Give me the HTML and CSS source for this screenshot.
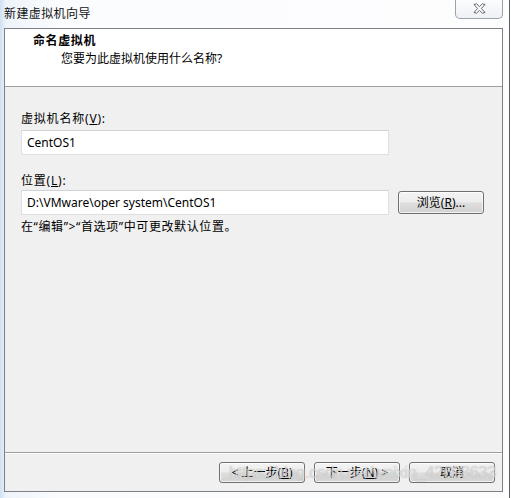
FILE: index.html
```html
<!DOCTYPE html>
<html lang="zh-CN">
<head>
<meta charset="utf-8">
<title>新建虚拟机向导</title>
<link rel="stylesheet" href="styles.css">
</head>
<body>
<div class="window">
  <div class="titlebar">
    <span class="title">新建虚拟机向导</span>
    <button class="close" aria-label="关闭">
      <svg width="13" height="11" viewBox="0 0 13 11">
        <path d="M1 1.5 L3.5 0.8 L6.5 3.6 L9.5 0.8 L12 1.5 L8.4 5.5 L12 9.5 L9.5 10.2 L6.5 7.4 L3.5 10.2 L1 9.5 L4.6 5.5 Z" fill="#ffffff" stroke="#4b5565" stroke-width="0.9" stroke-linejoin="round"/>
      </svg>
    </button>
  </div>
  <div class="panel">
    <div class="header">
      <div class="h-title">命名虚拟机</div>
      <div class="h-sub">您要为此虚拟机使用什么名称?</div>
    </div>
    <div class="body">
      <div class="label">虚拟机名称(<u>V</u>):</div>
      <div class="field">CentOS1</div>
      <div class="label label-2">位置(<u>L</u>):</div>
      <div class="row">
        <div class="field">D:\VMware\oper system\CentOS1</div>
        <button class="btn browse">浏览(<u>R</u>)...</button>
      </div>
      <p class="note">在“编辑”&gt;“首选项”中可更改默认位置。</p>
    </div>
    <div class="footer">
      <button class="btn">&lt; 上一步(<u>B</u>)</button>
      <button class="btn">下一步(<u>N</u>) &gt;</button>
      <button class="btn">取消</button>
    </div>
  </div>
  <div class="watermark">https://blog.csdn.net/weixin_42698633</div>
</div>
</body>
</html>
```

FILE: styles.css
```css
* {
  box-sizing: border-box;
}

html, body {
  margin: 0;
  padding: 0;
}

body {
  font-family: "Noto Sans", "Noto Sans CJK SC", sans-serif;
  font-size: 12px;
  color: #000;
  background: #ffffff;
}

.window {
  position: relative;
  width: 510px;
  height: 498px;
  border-right: 1px solid #5a5f66;
  background: linear-gradient(to right, #cfe0f2 0px, #eef4fa 6px, #fbfcfe 60px, #fdfdfe 100%);
  overflow: hidden;
}

.titlebar {
  height: 28px;
  display: flex;
  align-items: flex-start;
  padding-left: 4px;
}

.title {
  margin-top: 6px;
  line-height: 16px;
  letter-spacing: 0.4px;
  color: #111;
}

.close {
  margin-left: auto;
  margin-right: 6px;
  width: 48px;
  height: 19px;
  padding: 0;
  border: 1px solid #9aa2ad;
  border-top: none;
  border-radius: 0 0 5px 5px;
  background: linear-gradient(#fbfcfd, #eef1f5);
  display: flex;
  align-items: center;
  justify-content: center;
}

.close svg {
  display: block;
  margin-top: -1px;
}

.panel {
  margin-left: 4px;
  width: 499px;
  height: 464px;
  border: 1px solid #7d8086;
  display: flex;
  flex-direction: column;
  background: #f0f0f0;
}

.header {
  height: 58px;
  flex: none;
  background: #ffffff;
  border-bottom: 1px solid #a0a0a0;
  padding: 4px 0 0 28px;
}

.h-title {
  font-weight: bold;
  line-height: 16px;
  letter-spacing: 0.6px;
}

.h-sub {
  margin-top: 2px;
  padding-left: 28px;
  line-height: 16px;
}

.body {
  flex: 1;
  padding: 24px 0 0 16px;
}

.label {
  line-height: 16px;
  margin-bottom: 3px;
  letter-spacing: 0.8px;
}

.label-2 {
  margin-top: 18px;
  margin-bottom: 1px;
}

.field {
  width: 368px;
  height: 25px;
  background: #ffffff;
  border: 1px solid #dcdfe3;
  border-top-color: #cfd2d6;
  padding: 0 5px;
  line-height: 23px;
  white-space: nowrap;
}

.row {
  display: flex;
  align-items: center;
}

.btn {
  font-family: inherit;
  font-size: 12px;
  color: #000;
  width: 86px;
  height: 22px;
  padding: 0;
  border: 1px solid #707070;
  border-radius: 3px;
  background: linear-gradient(#f4f4f4 0%, #ececec 48%, #dedede 52%, #d2d2d2 100%);
  box-shadow: inset 0 0 0 1px rgba(255, 255, 255, 0.7);
  line-height: 18px;
  text-align: center;
}

.browse {
  margin-left: 9px;
  height: 23px;
}

.note {
  margin: 4px 0 0;
  line-height: 16px;
  letter-spacing: 0.6px;
}

.footer {
  height: 39px;
  flex: none;
  border-top: 1px solid #a0a0a0;
  box-shadow: inset 0 1px 0 #ffffff;
  display: flex;
  justify-content: flex-end;
  align-items: flex-start;
  gap: 9px;
  padding: 9px 7px 0 0;
}

.footer .btn {
  height: 21px;
}

.watermark {
  position: absolute;
  left: 229px;
  top: 463px;
  font-family: "Liberation Sans", sans-serif;
  font-size: 17px;
  letter-spacing: -0.6px;
  color: rgba(255, 255, 255, 0.55);
  text-shadow: 0 0 1px rgba(120, 120, 120, 0.6);
  white-space: nowrap;
  pointer-events: none;
}
```
